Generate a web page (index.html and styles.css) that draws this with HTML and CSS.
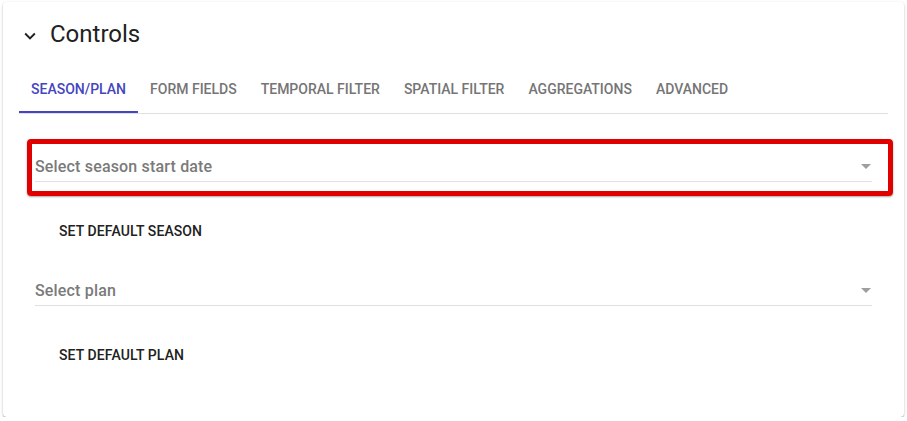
FILE: index.html
```html
<!DOCTYPE html>
<html>
<head>
<meta charset="utf-8">
<link rel="stylesheet" href="styles.css">
</head>
<body>
<div class="card">
  <div class="header">
    <svg class="chev" viewBox="0 0 24 24" width="22" height="22"><path d="M16.59 8.59L12 13.17 7.41 8.59 6 10l6 6 6-6z" fill="#212121"/></svg>
    <span class="title">Controls</span>
  </div>
  <div class="tabs">
    <div class="tab active">Season/Plan</div>
    <div class="tab">Form Fields</div>
    <div class="tab">Temporal Filter</div>
    <div class="tab">Spatial Filter</div>
    <div class="tab">Aggregations</div>
    <div class="tab">Advanced</div>
  </div>
  <div class="form">
    <div class="group">
      <div class="field">
        <span class="placeholder">Select season start date</span>
        <span class="arrow"></span>
        <div class="highlight"></div>
      </div>
      <div class="btn">Set default season</div>
    </div>
    <div class="group">
      <div class="field">
        <span class="placeholder">Select plan</span>
        <span class="arrow"></span>
      </div>
      <div class="btn">Set default plan</div>
    </div>
  </div>
</div>
</body>
</html>
```

FILE: styles.css
```css
html, body {
  margin: 0;
  padding: 0;
  background: #ffffff;
  font-family: Roboto, "Liberation Sans", sans-serif;
}
.card {
  box-sizing: border-box;
  margin: 2px 0 0 3px;
  width: 901px;
  height: 415px;
  background: #fff;
  border-radius: 4px;
  box-shadow: 0 1px 3px rgba(0,0,0,0.22), 0 1px 1px rgba(0,0,0,0.16), 0 2px 1px -1px rgba(0,0,0,0.12);
  padding: 0 16px;
}
.header {
  display: flex;
  align-items: center;
  height: 61px;
}
.chev {
  display: block;
  margin-top: 6px;
}
.title {
  margin-left: 9px;
  margin-top: 2px;
  font-size: 24px;
  color: #212121;
  line-height: 28px;
}
.tabs {
  display: flex;
  border-bottom: 1px solid #e0e0e0;
}
.tab {
  box-sizing: border-box;
  height: 50px;
  line-height: 52px;
  padding: 0 12px;
  font-size: 14px;
  font-weight: 500;
  text-transform: uppercase;
  color: #757575;
  border-bottom: 2px solid transparent;
}
.tab.active {
  color: #4545c2;
  border-bottom-color: #4545c2;
}
.form {
  padding: 36px 16px 0;
}
.group {
  display: flex;
  flex-direction: column;
  align-items: flex-start;
  padding-bottom: 26px;
}
.field {
  position: relative;
  align-self: stretch;
  height: 31px;
  border-bottom: 1px solid #e0e0e0;
  display: flex;
  align-items: center;
  justify-content: space-between;
}
.placeholder {
  padding-top: 2px;
  font-size: 16px;
  font-weight: 500;
  letter-spacing: 0.17px;
  color: #7a7a7a;
}
.arrow {
  width: 0;
  height: 0;
  border-left: 5px solid transparent;
  border-right: 5px solid transparent;
  border-top: 5px solid #9e9e9e;
  margin-right: 1px;
  margin-top: 2px;
}
.highlight {
  position: absolute;
  left: -8px;
  right: -21px;
  top: -11px;
  bottom: -15px;
  border: 5px solid #e00000;
  border-radius: 4px;
  box-shadow: 0 1px 2px rgba(0,0,0,0.35);
}
.btn {
  margin-top: 30px;
  height: 36px;
  line-height: 38px;
  padding: 0 16px;
  margin-left: 8px;
  font-size: 14px;
  font-weight: 500;
  letter-spacing: 0.1px;
  text-transform: uppercase;
  color: #212121;
}
```
